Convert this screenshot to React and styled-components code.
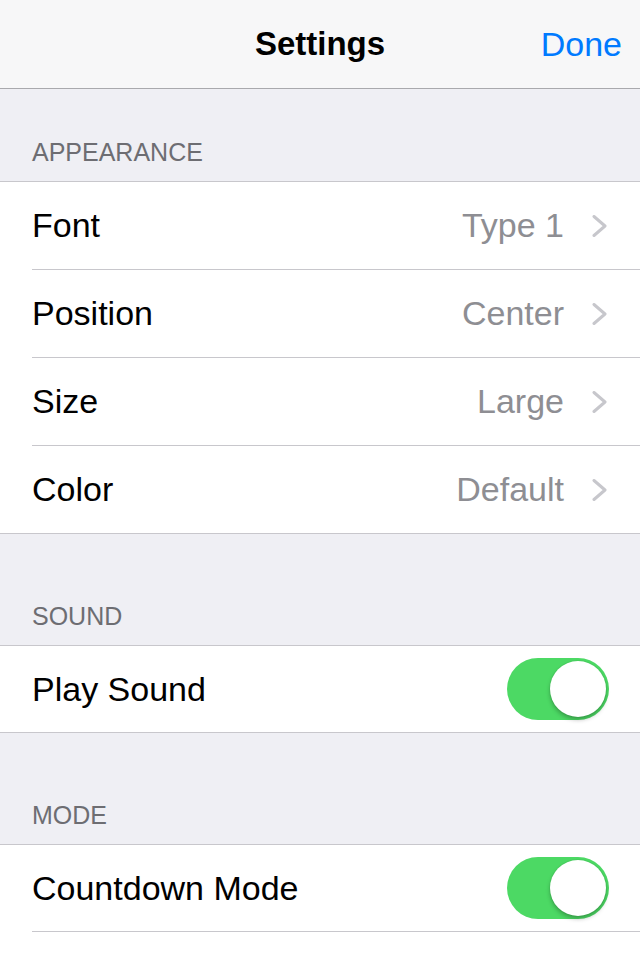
import React from 'react';
import { createGlobalStyle, styled } from 'styled-components';

const GlobalStyle = createGlobalStyle`
  html, body {
    margin: 0;
    padding: 0;
    background: #efeff4;
    font-family: "Liberation Sans", Arial, sans-serif;
    -webkit-font-smoothing: antialiased;
  }
`;

const Screen = styled.div`
  width: 640px;
  min-height: 960px;
  display: flex;
  flex-direction: column;
  background: #efeff4;
`;

const NavBar = styled.header`
  position: relative;
  height: 88px;
  display: flex;
  align-items: center;
  justify-content: flex-end;
  padding: 0 18px;
  background: #f7f7f8;
  border-bottom: 1px solid #a9a9ad;
`;

const NavTitle = styled.h1`
  position: absolute;
  left: 0;
  right: 0;
  margin: 0;
  text-align: center;
  font-size: 33px;
  font-weight: 700;
  color: #000;
  pointer-events: none;
`;

const NavButton = styled.button`
  border: 0;
  padding: 0;
  background: none;
  font-family: inherit;
  font-size: 34px;
  color: #007aff;
  cursor: pointer;
`;

const SectionHeader = styled.div`
  height: ${(p) => p.$height}px;
  box-sizing: border-box;
  display: flex;
  align-items: flex-end;
  padding: 0 32px 16px;
  font-size: 25px;
  line-height: 26px;
  color: #6d6d72;
  text-transform: uppercase;
`;

const Group = styled.section`
  background: #fff;
  border-top: 1px solid #c8c7cc;
  border-bottom: ${(p) => (p.$open ? '0' : '1px solid #c8c7cc')};
  flex: ${(p) => (p.$open ? '1' : 'none')};
`;

const Row = styled.div`
  height: ${(p) => (p.$short ? 86 : 87)}px;
  margin-left: 32px;
  padding-right: 32px;
  display: flex;
  align-items: center;
  border-bottom: 1px solid #c8c7cc;
  &:last-child {
    border-bottom: ${(p) => (p.$inset ? '1px solid #c8c7cc' : '0')};
  }
`;

const Label = styled.span`
  flex: 1;
  font-size: 34px;
  color: #000;
`;

const Value = styled.span`
  font-size: 34px;
  color: #8e8e93;
  margin-right: 28px;
`;

const Chevron = () => (
  <svg width="16" height="22" viewBox="0 0 16 22" fill="none">
    <polyline
      points="2,1.5 13,11 2,20.5"
      stroke="#c7c7cc"
      strokeWidth="3"
      strokeLinecap="round"
      strokeLinejoin="round"
    />
  </svg>
);

const Track = styled.div`
  width: 102px;
  height: 62px;
  box-sizing: border-box;
  border-radius: 31px;
  background: #4cd964;
  padding: 3px;
  display: flex;
  justify-content: ${(p) => (p.$on ? 'flex-end' : 'flex-start')};
  margin-right: -1px;
`;

const Knob = styled.div`
  width: 56px;
  height: 56px;
  border-radius: 50%;
  background: #fff;
  box-shadow: 0 3px 4px rgba(0, 0, 0, 0.25), 0 0 0 1px rgba(0, 0, 0, 0.04);
`;

const Toggle = ({ on }) => (
  <Track $on={on}>
    <Knob />
  </Track>
);

const appearance = [
  { label: 'Font', value: 'Type 1' },
  { label: 'Position', value: 'Center' },
  { label: 'Size', value: 'Large' },
  { label: 'Color', value: 'Default' },
];

export default function App() {
  return (
    <Screen>
      <GlobalStyle />
      <NavBar>
        <NavTitle>Settings</NavTitle>
        <NavButton>Done</NavButton>
      </NavBar>

      <SectionHeader $height={92}>Appearance</SectionHeader>
      <Group>
        {appearance.map((item) => (
          <Row key={item.label}>
            <Label>{item.label}</Label>
            <Value>{item.value}</Value>
            <Chevron />
          </Row>
        ))}
      </Group>

      <SectionHeader $height={111}>Sound</SectionHeader>
      <Group>
        <Row $short>
          <Label>Play Sound</Label>
          <Toggle on />
        </Row>
      </Group>

      <SectionHeader $height={111}>Mode</SectionHeader>
      <Group $open>
        <Row $inset $short>
          <Label>Countdown Mode</Label>
          <Toggle on />
        </Row>
      </Group>
    </Screen>
  );
}
